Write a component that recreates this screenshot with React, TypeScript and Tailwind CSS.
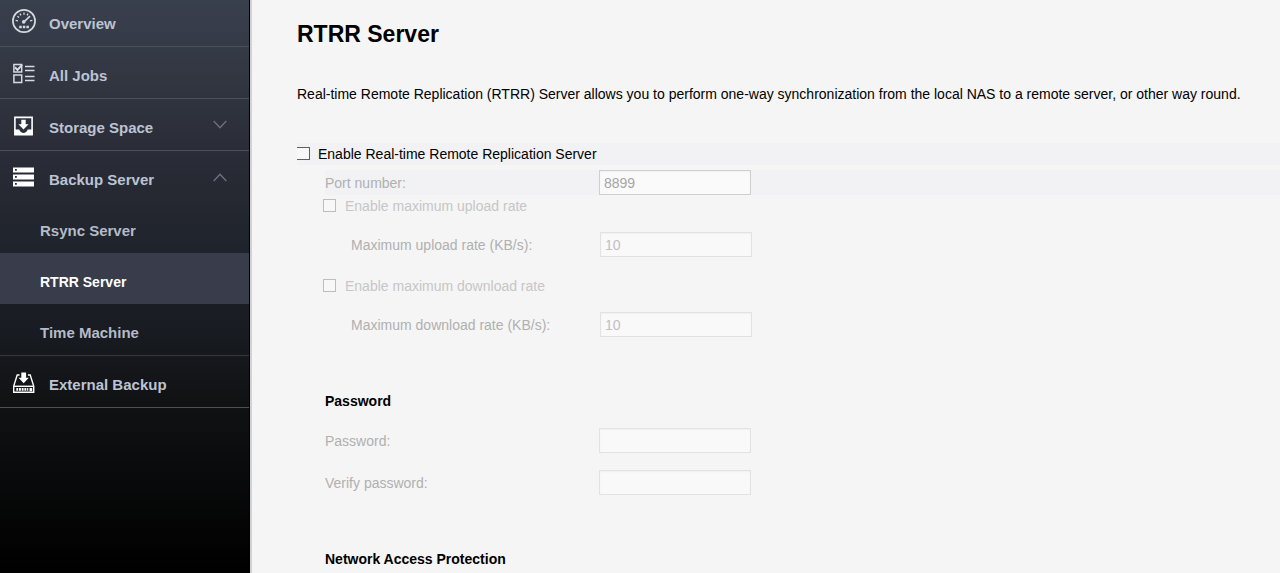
import React, { useState } from 'react';

type IconProps = { className?: string };

const GaugeIcon: React.FC<IconProps> = ({ className }) => (
  <svg viewBox="0 0 24 24" fill="none" stroke="currentColor" className={className} aria-hidden="true">
    <circle cx="12" cy="12" r="11.1" strokeWidth="1.7" />
    <path
      d="M3.600 11.300l2.400.500M5.400 7.200l1.700 1.300M8 4.600l.9 1.800M12 3.600v2.200M16 4.600l-.9 1.800M20.400 11.300l-2.400.5"
      strokeWidth="1.300"
    />
    <path d="M12 12.800l6-5.600" strokeWidth="1.600" />
    <circle cx="11.700" cy="12.900" r="1.800" fill="currentColor" stroke="none" />
    <path d="M7.200 16.800h2.500v2.500H7.200zM10.800 16.800h2.500v2.500h-2.500zM14.400 16.800h2.500v2.500h-2.500z" fill="currentColor" stroke="none" />
  </svg>
);

const JobsIcon: React.FC<IconProps> = ({ className }) => (
  <svg viewBox="0 0 24 24" fill="none" stroke="currentColor" className={className} aria-hidden="true">
    <path d="M1.900 3.500h7.800v7.500H1.900zM1.900 14h7.800v7.500H1.900z" strokeWidth="1.500" />
    <path d="M3 6.200l2.500 2.700L10 3.800" strokeWidth="2" />
    <path d="M13 5.500h9.500M13 9.500h9.500M13 15.500h9.500M13 19.500h9.500" strokeWidth="1.400" />
  </svg>
);

const StorageIcon: React.FC<IconProps> = ({ className }) => (
  <svg viewBox="0 0 24 24" fill="none" stroke="currentColor" className={className} aria-hidden="true">
    <path d="M2.900 4.400h17.200v17.200H2.900z" strokeWidth="1.600" />
    <path d="M2.500 16.600h4.800c.7 2.300 2.300 3.400 4.200 3.400s3.500-1.100 4.200-3.400h4.800V22h-18z" fill="currentColor" stroke="none" />
    <path d="M9.300 6.800h4.400v4.400h2.900l-5.100 5.300-5.100-5.300h2.900z" fill="currentColor" stroke="none" />
  </svg>
);

const ServerIcon: React.FC<IconProps> = ({ className }) => (
  <svg viewBox="0 0 24 24" fill="currentColor" fillRule="evenodd" className={className} aria-hidden="true">
    <path d="M1 2.500h21v5H1zM3 4v1.800h1.800V4z" />
    <path d="M1 9.500h21v5H1zM3 11v1.800h1.800V11z" />
    <path d="M1 16.500h21v5H1zM3 18v1.800h1.800V18z" />
  </svg>
);

const ExternalIcon: React.FC<IconProps> = ({ className }) => (
  <svg viewBox="0 0 24 24" fill="none" stroke="currentColor" className={className} aria-hidden="true">
    <path d="M7.500 5H5.200L1.700 16V22.300h20V16L18.200 5h-2.300" strokeWidth="1.400" />
    <path d="M1.700 16.300h20" strokeWidth="1.400" />
    <path d="M4.300 19.400h12" strokeWidth="2.600" strokeDasharray="1.900 0.800" />
    <path d="M17.500 18h2.700v3.200h-2.700z" fill="currentColor" stroke="none" />
    <path d="M9.300 2.500h4.800V7.700h2.700l-5.100 5.500-5.100-5.500h2.700z" fill="currentColor" stroke="none" />
  </svg>
);

const Chevron: React.FC<{ open: boolean }> = ({ open }) => (
  <svg viewBox="0 0 14 9" fill="none" stroke="#6b707b" strokeWidth="1.4" className="w-[14px] h-[9px]" aria-hidden="true">
    <path d={open ? 'M.7 8L7 1.200L13.300 8' : 'M.7 1L7 7.800L13.300 1'} />
  </svg>
);

const rowClass =
  'flex items-center w-full h-[52px] pl-3 pr-[22px] text-left text-[15px] font-bold text-[#bcc3d3]';
const lineClass = 'border-b border-[#4b505a]';

interface MenuRowProps {
  label: string;
  icon: React.ReactNode;
  open?: boolean;
  line?: boolean;
  onClick?: () => void;
}

const MenuRow: React.FC<MenuRowProps> = ({ label, icon, open, line = true, onClick }) => (
  <button
    type="button"
    onClick={onClick}
    aria-expanded={open}
    className={`${rowClass} ${line ? lineClass : ''}`}
  >
    {icon}
    <span className="flex-1 pl-[13px] pt-[6px]">{label}</span>
    {open !== undefined && <Chevron open={open} />}
  </button>
);

const servers = ['Rsync Server', 'RTRR Server', 'Time Machine'];

const Sidebar: React.FC = () => {
  const [storageOpen, setStorageOpen] = useState(false);
  const [backupOpen, setBackupOpen] = useState(true);
  const [active, setActive] = useState('RTRR Server');

  return (
    <aside className="w-[250px] shrink-0 overflow-hidden border-r border-black bg-[linear-gradient(#39404d_0%,#2b2e38_25%,#20242c_42%,#181b21_58%,#111214_70%,#000_100%)]">
      <nav className="-mt-[5px]">
        <MenuRow label="Overview" icon={<GaugeIcon className="size-6 text-[#d5d9e0]" />} />
        <MenuRow label="All Jobs" icon={<JobsIcon className="size-6 text-[#d5d9e0]" />} />
        <MenuRow
          label="Storage Space"
          icon={<StorageIcon className="size-6 text-white" />}
          open={storageOpen}
          onClick={() => setStorageOpen(!storageOpen)}
        />
        <MenuRow
          label="Backup Server"
          icon={<ServerIcon className="size-6 text-white" />}
          open={backupOpen}
          line={!backupOpen}
          onClick={() => setBackupOpen(!backupOpen)}
        />
        {backupOpen && (
          <ul className="-mt-px border-b border-[#35383d]">
            {servers.map((name) => (
              <li key={name}>
                <a
                  href="#"
                  onClick={() => setActive(name)}
                  className={`flex items-center h-[51px] pl-10 pt-[6px] font-bold ${
                    name === active ? 'bg-[#383c4b] text-white text-sm' : 'text-[#b4bac8] text-[15px]'
                  }`}
                >
                  {name}
                </a>
              </li>
            ))}
          </ul>
        )}
        <MenuRow label="External Backup" icon={<ExternalIcon className="size-6 text-white" />} />
      </nav>
    </aside>
  );
};

interface FieldProps {
  id: string;
  label: string;
  type?: string;
  value?: string;
  className?: string;
  inputClass?: string;
}

const Field: React.FC<FieldProps> = ({
  id,
  label,
  type = 'text',
  value,
  className = 'grid-cols-[274px_1fr]',
  inputClass = 'border-[#e2e2e2] bg-[#f9f9f9] text-[#c0c0c0]',
}) => (
  <div className={`grid items-center h-[25px] ${className}`}>
    <label htmlFor={id} className="text-[#b0b0b0]">
      {label}
    </label>
    <input
      id={id}
      type={type}
      defaultValue={value}
      disabled
      className={`w-[152px] h-[25px] px-1 border shadow-[inset_0_1px_2px_rgba(0,0,0,0.04)] ${inputClass}`}
    />
  </div>
);

const RateOption: React.FC<{ kind: string }> = ({ kind }) => (
  <div>
    <div className="flex items-center h-5">
      <input
        id={`limit-${kind}`}
        type="checkbox"
        disabled
        className="appearance-none size-[13px] -ml-[2px] mb-[2px] border border-[#bdbdbd] bg-[#f8f8f8]"
      />
      <label htmlFor={`limit-${kind}`} className="pl-[9px] text-[#c6c6c6]">
        Enable maximum {kind} rate
      </label>
    </div>
    <Field
      id={`rate-${kind}`}
      label={`Maximum ${kind} rate (KB/s):`}
      value="10"
      className="mt-4 pl-[26px] grid-cols-[249px_1fr]"
    />
  </div>
);

const App: React.FC = () => {
  const [enabled, setEnabled] = useState(false);

  return (
    <div className="flex min-h-screen bg-[#f5f5f5] font-['Liberation_Sans',Arial,sans-serif] text-sm leading-5 text-black">
      <Sidebar />
      <main className="flex-1 min-w-0 pl-[45px] pt-5 border-l-2 border-[#d2d2d6]">
        <h1 className="text-[23px] leading-7 font-bold">RTRR Server</h1>
        <p className="mt-9">
          Real-time Remote Replication (RTRR) Server allows you to perform one-way synchronization from the local
          NAS to a remote server, or other way round.
        </p>

        <form className="mt-[39px]">
          <div className="flex items-center h-[22px] bg-[#f2f2f4]">
            <input
              id="enable-rtrr"
              type="checkbox"
              checked={enabled}
              onChange={(e) => setEnabled(e.target.checked)}
              className="appearance-none w-[13px] h-[13px] mb-[2px] border border-l-0 border-[#5f5f5f] bg-[#f8f8f8] checked:bg-[#5f5f5f]"
            />
            <label htmlFor="enable-rtrr" className="pl-2">
              Enable Real-time Remote Replication Server
            </label>
          </div>

          <div className="pl-7">
            <div className="mt-[5px] bg-[#f2f2f4]">
              <Field
                id="port"
                label="Port number:"
                value="8899"
                inputClass="border-[#cfcfd2] bg-[#fafafb] text-[#a6a6a6]"
              />
            </div>
            <div className="mt-px flex flex-col gap-[19px]">
              <RateOption kind="upload" />
              <RateOption kind="download" />
            </div>

            <h2 className="mt-[54px] font-bold">Password</h2>
            <div className="mt-[17px] flex flex-col gap-[17px]">
              <Field id="password" label="Password:" type="password" />
              <Field id="verify" label="Verify password:" type="password" />
            </div>

            <h2 className="mt-[54px] font-bold">Network Access Protection</h2>
          </div>
        </form>
      </main>
    </div>
  );
};

export default App;
